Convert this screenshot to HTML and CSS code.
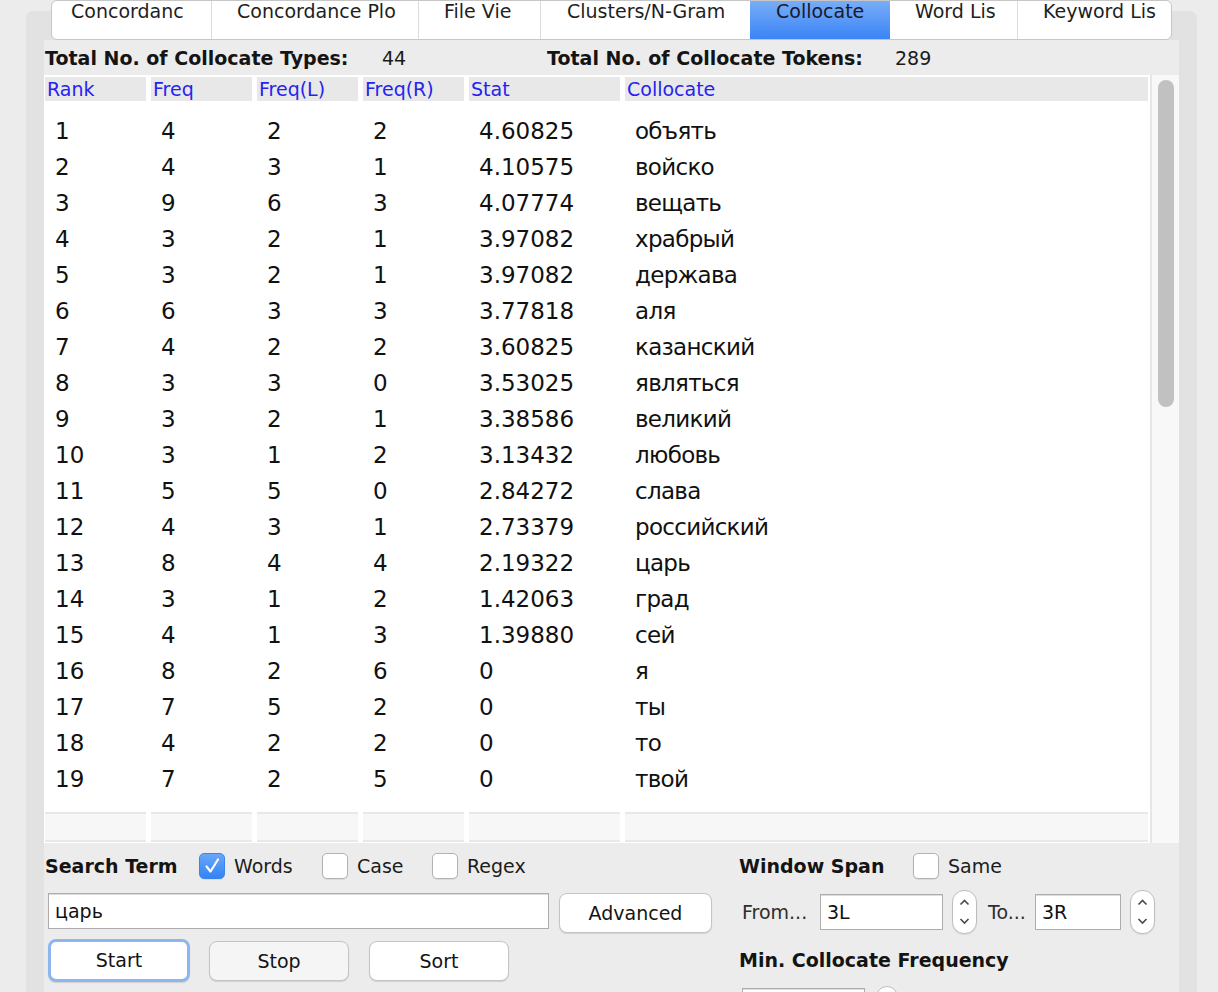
FILE: index.html
```html
<!DOCTYPE html>
<html>
<head>
<meta charset="utf-8">
<title>Collocate</title>
<link rel="stylesheet" href="styles.css">
</head>
<body>
<div class="window">
  <div class="pane">
    <div class="tabs">
      <div class="tab t1"><span class="tl">Concordanc</span></div>
      <div class="tab t2"><span class="tl">Concordance Plo</span></div>
      <div class="tab t3"><span class="tl">File Vie</span></div>
      <div class="tab t4"><span class="tl">Clusters/N-Gram</span></div>
      <div class="tab t5 active"><span class="tl">Collocate</span></div>
      <div class="tab t6"><span class="tl">Word Lis</span></div>
      <div class="tab t7"><span class="tl">Keyword Lis</span></div>
    </div>
    <div class="content">
      <div class="stats">
        <span class="stat-label sl1">Total No. of Collocate Types:</span>
        <span class="stat-val sv1">44</span>
        <span class="stat-label sl2">Total No. of Collocate Tokens:</span>
        <span class="stat-val">289</span>
      </div>
      <div class="table">
        <div class="grid">
          <div class="row head">
            <div class="c c1">Rank</div><div class="c c2">Freq</div><div class="c c3">Freq(L)</div><div class="c c4">Freq(R)</div><div class="c c5">Stat</div><div class="c c6">Collocate</div>
          </div>
          <div class="rows">
            <div class="row"><div class="c c1">1</div><div class="c c2">4</div><div class="c c3">2</div><div class="c c4">2</div><div class="c c5">4.60825</div><div class="c c6">объять</div></div>
            <div class="row"><div class="c c1">2</div><div class="c c2">4</div><div class="c c3">3</div><div class="c c4">1</div><div class="c c5">4.10575</div><div class="c c6">войско</div></div>
            <div class="row"><div class="c c1">3</div><div class="c c2">9</div><div class="c c3">6</div><div class="c c4">3</div><div class="c c5">4.07774</div><div class="c c6">вещать</div></div>
            <div class="row"><div class="c c1">4</div><div class="c c2">3</div><div class="c c3">2</div><div class="c c4">1</div><div class="c c5">3.97082</div><div class="c c6">храбрый</div></div>
            <div class="row"><div class="c c1">5</div><div class="c c2">3</div><div class="c c3">2</div><div class="c c4">1</div><div class="c c5">3.97082</div><div class="c c6">держава</div></div>
            <div class="row"><div class="c c1">6</div><div class="c c2">6</div><div class="c c3">3</div><div class="c c4">3</div><div class="c c5">3.77818</div><div class="c c6">аля</div></div>
            <div class="row"><div class="c c1">7</div><div class="c c2">4</div><div class="c c3">2</div><div class="c c4">2</div><div class="c c5">3.60825</div><div class="c c6">казанский</div></div>
            <div class="row"><div class="c c1">8</div><div class="c c2">3</div><div class="c c3">3</div><div class="c c4">0</div><div class="c c5">3.53025</div><div class="c c6">являться</div></div>
            <div class="row"><div class="c c1">9</div><div class="c c2">3</div><div class="c c3">2</div><div class="c c4">1</div><div class="c c5">3.38586</div><div class="c c6">великий</div></div>
            <div class="row"><div class="c c1">10</div><div class="c c2">3</div><div class="c c3">1</div><div class="c c4">2</div><div class="c c5">3.13432</div><div class="c c6">любовь</div></div>
            <div class="row"><div class="c c1">11</div><div class="c c2">5</div><div class="c c3">5</div><div class="c c4">0</div><div class="c c5">2.84272</div><div class="c c6">слава</div></div>
            <div class="row"><div class="c c1">12</div><div class="c c2">4</div><div class="c c3">3</div><div class="c c4">1</div><div class="c c5">2.73379</div><div class="c c6">российский</div></div>
            <div class="row"><div class="c c1">13</div><div class="c c2">8</div><div class="c c3">4</div><div class="c c4">4</div><div class="c c5">2.19322</div><div class="c c6">царь</div></div>
            <div class="row"><div class="c c1">14</div><div class="c c2">3</div><div class="c c3">1</div><div class="c c4">2</div><div class="c c5">1.42063</div><div class="c c6">град</div></div>
            <div class="row"><div class="c c1">15</div><div class="c c2">4</div><div class="c c3">1</div><div class="c c4">3</div><div class="c c5">1.39880</div><div class="c c6">сей</div></div>
            <div class="row"><div class="c c1">16</div><div class="c c2">8</div><div class="c c3">2</div><div class="c c4">6</div><div class="c c5">0</div><div class="c c6">я</div></div>
            <div class="row"><div class="c c1">17</div><div class="c c2">7</div><div class="c c3">5</div><div class="c c4">2</div><div class="c c5">0</div><div class="c c6">ты</div></div>
            <div class="row"><div class="c c1">18</div><div class="c c2">4</div><div class="c c3">2</div><div class="c c4">2</div><div class="c c5">0</div><div class="c c6">то</div></div>
            <div class="row"><div class="c c1">19</div><div class="c c2">7</div><div class="c c3">2</div><div class="c c4">5</div><div class="c c5">0</div><div class="c c6">твой</div></div>
          </div>
          <div class="row foot">
            <div class="c c1"></div><div class="c c2"></div><div class="c c3"></div><div class="c c4"></div><div class="c c5"></div><div class="c c6"></div>
          </div>
        </div>
        <div class="vscroll"><div class="thumb"></div></div>
      </div>
      <div class="controls">
        <div class="col left">
          <div class="line line1">
            <span class="bold search-lbl">Search Term</span>
            <span class="chk-group g-words"><span class="chk on"><svg width="24" height="24" viewBox="0 0 24 24"><path d="M6.5 12.5 L10.5 17.5 L18 5.5" fill="none" stroke="#fff" stroke-width="2.2" stroke-linecap="round" stroke-linejoin="round"/></svg></span><span class="chk-label">Words</span></span>
            <span class="chk-group g-case"><span class="chk"></span><span class="chk-label">Case</span></span>
            <span class="chk-group"><span class="chk"></span><span class="chk-label">Regex</span></span>
          </div>
          <div class="line line2">
            <div class="field search-field">царь</div>
            <div class="btn adv">Advanced</div>
          </div>
          <div class="line line3">
            <div class="btn start">Start</div>
            <div class="btn stop">Stop</div>
            <div class="btn sort">Sort</div>
          </div>
        </div>
        <div class="col right">
          <div class="line line1">
            <span class="bold ws-lbl">Window Span</span>
            <span class="chk"></span><span class="chk-label">Same</span>
          </div>
          <div class="line rline2">
            <span class="from-lbl">From...</span>
            <div class="field f1">3L</div>
            <div class="spin"><svg width="23" height="42" viewBox="0 0 23 42"><path d="M7.5 13.5 L11.5 9.5 L15.5 13.5" fill="none" stroke="#4a4a4a" stroke-width="1.6"/><path d="M7.5 28 L11.5 32 L15.5 28" fill="none" stroke="#4a4a4a" stroke-width="1.6"/></svg></div>
            <span class="to-lbl">To...</span>
            <div class="field f2">3R</div>
            <div class="spin"><svg width="23" height="42" viewBox="0 0 23 42"><path d="M7.5 13.5 L11.5 9.5 L15.5 13.5" fill="none" stroke="#4a4a4a" stroke-width="1.6"/><path d="M7.5 28 L11.5 32 L15.5 28" fill="none" stroke="#4a4a4a" stroke-width="1.6"/></svg></div>
          </div>
          <div class="line rline3 bold">Min. Collocate Frequency</div>
          <div class="line rline4">
            <div class="field f3"></div>
            <div class="spin small"></div>
          </div>
        </div>
      </div>
    </div>
  </div>
</div>
</body>
</html>
```
FILE: styles.css
```css
* { box-sizing: border-box; }
html, body { margin: 0; padding: 0; }
body {
  width: 1218px;
  height: 992px;
  overflow: hidden;
  background: #ececec;
  font-family: "DejaVu Sans", Verdana, sans-serif;
  font-size: 19px;
  color: #161616;
}
.window { padding: 0 21px 0 26px; height: 992px; }
.pane {
  margin-top: 11px;
  height: 981px;
  background: #e2e2e2;
  border-radius: 7px 7px 0 0;
  padding: 0 18px;
  display: flex;
  flex-direction: column;
}
.tabs {
  flex: none;
  margin: -11px 7px 0 7px;
  height: 40px;
  background: #fff;
  border: 1px solid #c6c6c6;
  border-radius: 6px;
  display: flex;
}
.tab {
  height: 100%;
  padding-left: 25px;
  border-right: 1px solid #dcdcdc;
  white-space: nowrap;
  line-height: 21px;
  color: #1e1e1e;
  flex: none;
}
.tl { display: inline-block; vertical-align: top; white-space: nowrap; }
.t1 { width: 160px; padding-left: 19px; border-radius: 5px 0 0 5px; }
.t2 { width: 207px; }
.t3 { width: 122px; }
.t4 { width: 209px; border-right: none; padding-left: 26px; }
.t5 { width: 140px; border-right: none; padding-left: 26px; }
.t6 { width: 128px; }
.t7 { flex: 1; border-right: none; }
.active { background: linear-gradient(#78adf7, #3a84f6); color: #1a1a2a; }

.content {
  flex: 1;
  background: #ececec;
  display: flex;
  flex-direction: column;
}
.stats {
  flex: none;
  height: 35px;
  padding-top: 2px;
  line-height: 33px;
  display: flex;
  white-space: nowrap;
}
.stat-label { font-weight: bold; color: #141414; }
.sl1 { width: 338px; padding-left: 1px; }
.sv1 { width: 165px; }
.sl2 { width: 348px; }
.stat-val { color: #1a1a1a; }

.table { flex: none; height: 768px; display: flex; }
.grid {
  flex: 1;
  background: #fff;
  padding: 2px 2px 1px 1px;
  display: flex;
  flex-direction: column;
}
.row { display: flex; gap: 5px; }
.c { white-space: nowrap; overflow: hidden; }
.c1, .c2, .c3, .c4 { width: 101px; flex: none; }
.c5 { width: 151px; flex: none; }
.c6 { flex: 1; }
.head .c {
  background: #e8e8e8;
  height: 24px;
  line-height: 24px;
  padding-left: 2px;
  color: #2424ee;
}
.rows { flex: 1; margin-top: 12px; }
.rows .row { height: 36px; line-height: 36px; font-size: 23px; color: #111; }
.rows .c { padding-left: 10px; }
.rows .c6 { letter-spacing: -0.7px; }
.foot .c {
  height: 30px;
  background: #f7f7f7;
  border-top: 2px solid #e8e8e8;
  border-bottom: 2px solid #e8e8e8;
}
.vscroll {
  width: 29px;
  border-left: 2px solid #e6e6e6;
  background: #f8f8f8;
  padding: 5px 0 0 6px;
}
.thumb { width: 16px; height: 327px; background: #c1c1c1; border-radius: 8px; }

.controls { flex: 1; display: flex; padding-top: 10px; }
.left { width: 695px; flex: none; }
.right { flex: 1; }
.line { display: flex; align-items: center; white-space: nowrap; }
.bold { font-weight: bold; color: #141414; }
.line1 { height: 26px; }
.search-lbl { width: 155px; padding-left: 1px; }
.chk-group { display: flex; align-items: center; }
.g-words { width: 123px; }
.g-case { width: 110px; }
.chk {
  flex: none;
  width: 26px;
  height: 26px;
  border: 1px solid #b2b2b2;
  border-radius: 5px;
  background: #fff;
  box-shadow: 0 1px 1px rgba(0,0,0,0.08);
  display: flex;
  align-items: center;
  justify-content: center;
}
.chk.on { background: linear-gradient(#68a7f8, #3383f5); border-color: #3d84ea; }
.chk-label { margin-left: 9px; color: #1c1c1c; }

.field {
  flex: none;
  height: 36px;
  background: #fff;
  border: 1px solid #adadad;
  box-shadow: inset 0 1px 0 #dcdcdc;
  padding-left: 6px;
  line-height: 34px;
  color: #111;
}
.line2 { margin-top: 14px; align-items: flex-start; }
.search-field { margin-left: 4px; width: 501px; }
.btn {
  flex: none;
  height: 40px;
  background: #fff;
  border: 1px solid #c4c4c4;
  border-radius: 8px;
  box-shadow: 0 1px 1px rgba(0,0,0,0.12);
  text-align: center;
  line-height: 38px;
  color: #141414;
}
.adv { margin-left: 10px; width: 153px; }
.line3 { margin-top: 6px; height: 43px; }
.start {
  margin-left: 4px;
  width: 142px;
  height: 43px;
  border: 3px solid #8db6f0;
  line-height: 37px;
}
.stop { margin-left: 19px; width: 140px; background: #f5f5f5; }
.sort { margin-left: 20px; width: 140px; }

.ws-lbl { width: 174px; }
.rline2 { margin-top: 11px; height: 44px; }
.from-lbl { margin-left: 3px; width: 78px; color: #2e2e2e; }
.f1 { width: 123px; }
.spin {
  flex: none;
  margin-left: 9px;
  width: 25px;
  height: 44px;
  border: 1px solid #bdbdbd;
  border-radius: 12px;
  background: #fff;
  box-shadow: 0 1px 1px rgba(0,0,0,0.08);
}
.to-lbl { margin-left: 11px; width: 47px; color: #2e2e2e; }
.f2 { width: 86px; }
.rline3 { margin-top: 14px; height: 24px; line-height: 24px; }
.rline4 { margin-top: 14px; align-items: flex-start; }
.f3 { margin-left: 3px; margin-top: 2px; width: 123px; }
.spin.small { margin-left: 11px; width: 22px; border-radius: 11px; }
```
